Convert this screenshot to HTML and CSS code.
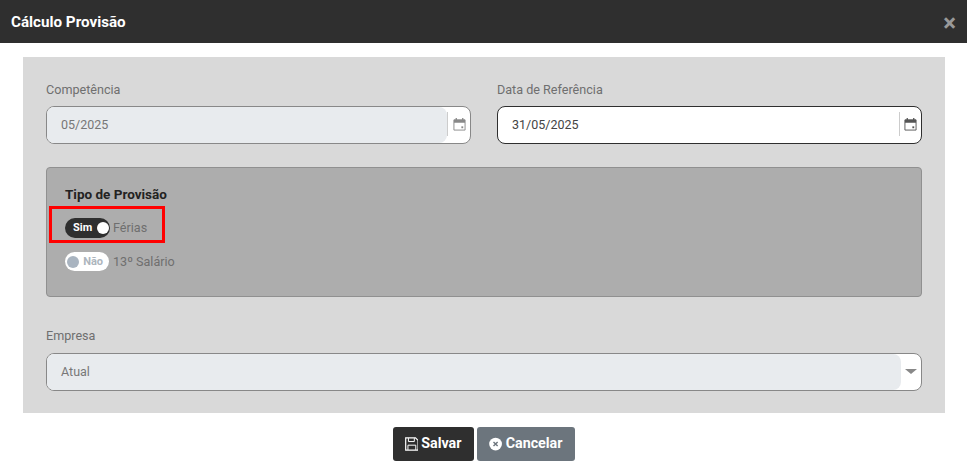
FILE: index.html
```html
<!DOCTYPE html>
<html lang="pt">
<head>
<meta charset="utf-8">
<title>Cálculo Provisão</title>
<link rel="stylesheet" href="styles.css">
</head>
<body>
<header class="modal-header">
  <h1 class="modal-title">Cálculo Provisão</h1>
  <span class="close">×</span>
</header>
<main class="panel">
  <div class="row">
    <div class="field">
      <label class="label">Competência</label>
      <div class="input input-disabled">
        <div class="value">05/2025</div>
        <div class="addon">
          <svg class="cal" viewBox="0 0 14 14" width="13" height="13"><path d="M3.500 0v2.500M10.500 0v2.500" stroke="#888" stroke-width="1.400" fill="none"/><path d="M1 2h12v11H1z" fill="none" stroke="#888"/><path d="M1 2h12v3H1z" fill="#888"/><rect x="9" y="9" width="2" height="2" fill="#888"/></svg>
        </div>
      </div>
    </div>
    <div class="field">
      <label class="label">Data de Referência</label>
      <div class="input input-active">
        <div class="value">31/05/2025</div>
        <div class="addon">
          <svg class="cal" viewBox="0 0 14 14" width="13" height="13"><path d="M3.500 0v2.500M10.500 0v2.500" stroke="#555" stroke-width="1.400" fill="none"/><path d="M1 2h12v11H1z" fill="none" stroke="#555"/><path d="M1 2h12v3H1z" fill="#555"/><rect x="9" y="9" width="2" height="2" fill="#555"/></svg>
        </div>
      </div>
    </div>
  </div>
  <section class="group">
    <h2 class="group-title">Tipo de Provisão</h2>
    <div class="toggle-row highlighted">
      <span class="toggle on"><span class="toggle-text">Sim</span><span class="knob"></span></span>
      <span class="toggle-label">Férias</span>
    </div>
    <div class="toggle-row">
      <span class="toggle off"><span class="knob"></span><span class="toggle-text">Não</span></span>
      <span class="toggle-label">13º Salário</span>
    </div>
  </section>
  <div class="field company">
    <label class="label">Empresa</label>
    <div class="input input-select">
      <div class="value">Atual</div>
      <div class="caret"></div>
    </div>
  </div>
</main>
<footer class="actions">
  <button class="btn btn-dark">
    <svg viewBox="0 0 14 14" width="14" height="14"><path d="M0.700 0.700h10l2.600 2.600v10H0.700z" fill="none" stroke="#fff" stroke-width="1.200"/><path d="M3.500 1v3.500h6V1" fill="none" stroke="#fff"/><path d="M3 13V8.200h8V13" fill="none" stroke="#fff"/></svg>
    Salvar
  </button>
  <button class="btn btn-grey">
    <svg viewBox="0 0 14 14" width="14" height="14"><circle cx="7" cy="7" r="6.800" fill="#fff"/><path d="M4.800 4.800l4.400 4.400M9.200 4.800l-4.400 4.400" stroke="#6c757d" stroke-width="1.500"/></svg>
    Cancelar
  </button>
</footer>
</body>
</html>
```
FILE: styles.css
```css
*, *::before, *::after { box-sizing: border-box; }
html, body { margin: 0; padding: 0; }
body {
  width: 967px;
  height: 473px;
  overflow: hidden;
  background: #fff;
  font-family: Roboto, "Liberation Sans", sans-serif;
  font-size: 13px;
  color: #777;
}
.modal-header {
  height: 43px;
  background: #2f2f2f;
  display: flex;
  align-items: center;
  justify-content: space-between;
  padding: 0 11px;
}
.modal-title { margin: 0; font-size: 15.200px; font-weight: 700; color: #fff; }
.close { color: #999; font-size: 24px; font-weight: 700; line-height: 1; margin-top: 2px; }
.panel {
  margin: 14px 22px 0 23px;
  height: 356px;
  background: #d9d9d9;
  padding: 24px 23px 0;
}
.row { display: grid; grid-template-columns: 425px 425px; gap: 26px; }
.label { display: block; height: 16px; line-height: 17px; color: #6f6f6f; font-size: 12.600px; margin-bottom: 9px; }
.input {
  height: 38px;
  background: #fff;
  border: 1px solid #888;
  border-radius: 8px;
  display: flex;
  align-items: stretch;
  overflow: hidden;
}
.input-active { border-color: #2f2f2f; color: #444; }
.value { flex: 1; padding-left: 14px; line-height: 35px; font-size: 12.500px; }
.input-disabled .value { background: #e8ebee; border-radius: 0 8px 8px 0; }
.input-select .value { background: #e8ebee; border-radius: 0 8px 8px 0; }
.addon { width: 23px; display: flex; align-items: center; justify-content: center; position: relative; padding: 0 0 1px 1px; }
.input-active .addon { width: 22px; }
.addon::before { content: ""; position: absolute; left: 0; top: 5px; bottom: 7px; width: 1px; background: #ccc; }
.group {
  margin-top: 23px;
  height: 130px;
  background: #adadad;
  border: 1px solid #909090;
  border-radius: 4px;
  padding: 18px 18px 0;
}
.group-title { margin: 0; font-size: 13.500px; font-weight: 700; color: #222; line-height: 16px; }
.toggle-row { display: flex; align-items: center; gap: 3px; height: 21px; margin-top: 15px; position: relative; }
.toggle-row + .toggle-row { margin-top: 13px; }
.highlighted::after {
  content: "";
  position: absolute;
  left: -16px;
  top: -11px;
  width: 116px;
  height: 37px;
  border: 3px solid #f00;
  pointer-events: none;
}
.toggle {
  width: 45px;
  height: 20px;
  border-radius: 10px;
  display: flex;
  align-items: center;
  justify-content: space-between;
  font-size: 11px;
  font-weight: 700;
}
.toggle.on { background: #2f2f2f; color: #fff; padding: 0 1.500px 0 8px; }
.toggle.off { background: #fff; color: #adb5bd; padding: 0 6px 0 2px; height: 19px; width: 44px; margin-right: 1px; }
.knob { width: 12px; height: 12px; border-radius: 50%; background: #fff; }
.off .knob { background: #a9b4c0; }
.toggle-label { font-size: 12.600px; color: #6f6f6f; }
.company { margin-top: 30px; }
.company .label { margin-bottom: 10px; }
.input-select { position: relative; }
.caret { width: 20px; position: relative; }
.caret::after {
  content: "";
  position: absolute;
  left: 4px;
  top: 15px;
  border-left: 6px solid transparent;
  border-right: 6px solid transparent;
  border-top: 5px solid #888;
}
.actions { display: flex; justify-content: center; gap: 3px; margin-top: 14px; }
.btn {
  height: 34px;
  border: 0;
  border-radius: 3px;
  color: #fff;
  font-family: inherit;
  font-size: 14.300px;
  line-height: 16px;
  padding: 0 12px 2px;
  font-weight: 700;
  display: flex;
  align-items: center;
  gap: 3px;
}
.btn svg { margin-top: 2px; }
.btn-dark { background: #2f2f2f; width: 81px; }
.btn-grey { background: #6c757d; width: 98px; gap: 4px; }
```
